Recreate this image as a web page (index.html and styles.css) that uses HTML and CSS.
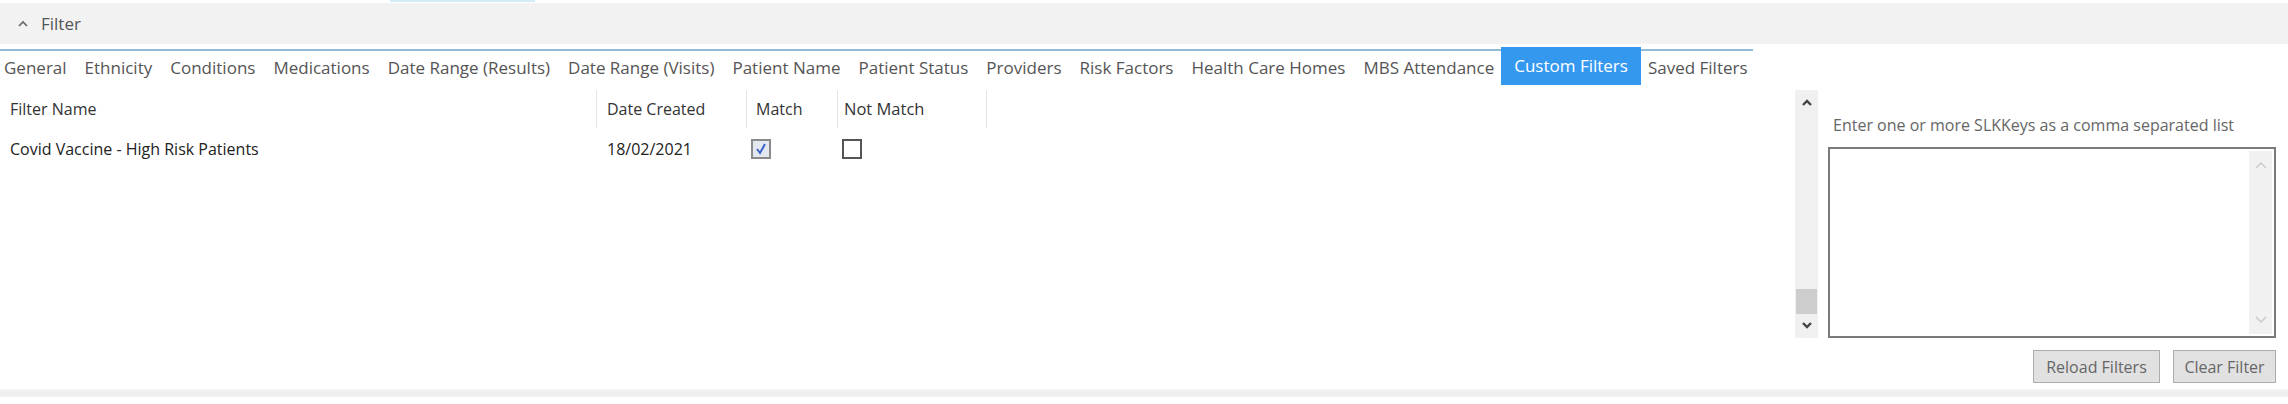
FILE: index.html
```html
<!DOCTYPE html>
<html lang="en">
<head>
    <meta charset="UTF-8">
    <title>Filter</title>
    <link rel="stylesheet" href="styles.css">
</head>
<body>
    <div class="topstrip"><span class="topmark"></span></div>

    <div class="header">
        <svg class="caret" width="10" height="7" viewBox="0 0 10 7"><polyline points="1,6 5,2 9,6" fill="none" stroke="#666" stroke-width="1.6"/></svg>
        <span>Filter</span>
    </div>

    <div class="tabs">
        <span class="tab">General</span>
        <span class="tab">Ethnicity</span>
        <span class="tab">Conditions</span>
        <span class="tab">Medications</span>
        <span class="tab">Date Range (Results)</span>
        <span class="tab">Date Range (Visits)</span>
        <span class="tab">Patient Name</span>
        <span class="tab">Patient Status</span>
        <span class="tab">Providers</span>
        <span class="tab">Risk Factors</span>
        <span class="tab">Health Care Homes</span>
        <span class="tab">MBS Attendance</span>
        <span class="tab active">Custom Filters</span>
        <span class="tab">Saved Filters</span>
    </div>

    <div class="content">
        <div class="grid-area">
            <div class="grid-row head">
                <div class="cell name">Filter Name</div>
                <div class="cell date">Date Created</div>
                <div class="cell match">Match</div>
                <div class="cell notmatch">Not Match</div>
            </div>
            <div class="grid-row data">
                <div class="cell name">Covid Vaccine - High Risk Patients</div>
                <div class="cell date">18/02/2021</div>
                <div class="cell box-cell"><span class="checkbox checked">
                    <svg width="14" height="14" viewBox="0 0 14 14"><polyline points="3,7 6,11 11,2" fill="none" stroke="#3b63c9" stroke-width="2"/></svg>
                </span></div>
                <div class="cell box-cell"><span class="checkbox"></span></div>
            </div>
        </div>

        <div class="vscroll">
            <svg class="arrow" width="12" height="8" viewBox="0 0 12 8"><polyline points="2,7 6,3 10,7" fill="none" stroke="#444" stroke-width="2.4"/></svg>
            <div class="track"><div class="thumb"></div></div>
            <svg class="arrow" width="12" height="8" viewBox="0 0 12 8"><polyline points="2,1 6,5 10,1" fill="none" stroke="#444" stroke-width="2.4"/></svg>
        </div>

        <div class="side">
            <div class="side-label">Enter one or more SLKKeys as a comma separated list</div>
            <div class="keys-box">
                <div class="keys-text"></div>
                <div class="keys-scroll">
                    <svg width="12" height="8" viewBox="0 0 12 8"><polyline points="1,7 6,2 11,7" fill="none" stroke="#c8c8c8" stroke-width="1.4"/></svg>
                    <svg width="12" height="8" viewBox="0 0 12 8"><polyline points="1,1 6,6 11,1" fill="none" stroke="#c8c8c8" stroke-width="1.4"/></svg>
                </div>
            </div>
            <div class="side-buttons">
                <button class="btn reload">Reload Filters</button>
                <button class="btn clear">Clear Filter</button>
            </div>
        </div>
    </div>

    <div class="bottom-band"></div>
</body>
</html>
```

FILE: styles.css
```css
body {
    margin: 0;
    width: 2288px;
    height: 404px;
    overflow: hidden;
    background-color: #FFFFFF;
    font-family: 'Open Sans', 'Noto Sans', sans-serif;
    font-size: 16px;
    color: #333333;
}

.topstrip {
    height: 3px;
}

.topmark {
    display: block;
    margin-left: 390px;
    width: 145px;
    height: 2px;
    background-color: #d3ecf8;
}

.header {
    height: 41px;
    background-color: #f2f2f2;
    display: flex;
    align-items: center;
    gap: 13px;
    padding-left: 18px;
    color: #555555;
    font-size: 17px;
}

.tabs {
    margin-top: 5px;
    width: 1753px;
    height: 34px;
    border-top: 2px solid #8fbcd4;
    display: flex;
    align-items: stretch;
}

.tab {
    padding: 0 9px;
    line-height: 34px;
    color: #555555;
    font-size: 17px;
    white-space: nowrap;
}

.tab:first-child {
    padding-left: 4px;
}

.tab.active {
    margin: -4px -2px 0;
    line-height: 38px;
    padding: 0 13px;
    background-color: #3598ef;
    color: #FFFFFF;
}

.content {
    margin-top: 5px;
    height: 299px;
    display: flex;
}

.grid-area {
    flex: 1;
}

.grid-row {
    display: grid;
    grid-template-columns: 597px 150px 91px 149px;
}

.grid-row.head {
    height: 38px;
}

.grid-row.head .cell {
    border-right: 1px solid #e4e4e4;
    line-height: 38px;
    color: #333333;
}

.grid-row.data {
    height: 42px;
    align-items: center;
    color: #222222;
}

.cell {
    white-space: nowrap;
}

.cell.name {
    padding-left: 10px;
}

.cell.date {
    padding-left: 10px;
}

.cell.match {
    padding-left: 9px;
}

.cell.notmatch {
    padding-left: 6px;
    font-size: 16.5px;
}

.box-cell {
    padding-left: 4px;
    display: flex;
    align-items: center;
}

.checkbox {
    box-sizing: border-box;
    width: 20px;
    height: 20px;
    border: 2px solid #555555;
    background-color: #FFFFFF;
    display: flex;
    align-items: center;
    justify-content: center;
}

.checkbox.checked {
    border-color: #8a8a8a;
    background-color: #e3e7ef;
}

.vscroll {
    width: 23px;
    height: 248px;
    background-color: #f0f0f0;
    display: flex;
    flex-direction: column;
    align-items: center;
}

.vscroll .arrow {
    margin: 8px 0;
}

.track {
    flex: 1;
    width: 100%;
    display: flex;
    flex-direction: column;
    justify-content: flex-end;
}

.thumb {
    height: 25px;
    background-color: #cdcdcd;
    margin: 0 1px;
}

.side {
    width: 470px;
    box-sizing: border-box;
    padding: 0 12px 0 10px;
}

.side-label {
    margin-top: 23px;
    padding-left: 5px;
    line-height: 24px;
    color: #666666;
    white-space: nowrap;
}

.keys-box {
    margin-top: 10px;
    box-sizing: border-box;
    height: 191px;
    border: 2px solid #7a7a7a;
    display: flex;
}

.keys-text {
    flex: 1;
}

.keys-scroll {
    width: 23px;
    margin: 2px 2px 2px 0;
    background-color: #f1f1f1;
    display: flex;
    flex-direction: column;
    justify-content: space-between;
    align-items: center;
    padding: 10px 0;
}

.side-buttons {
    margin-top: 12px;
    display: flex;
    justify-content: flex-end;
    gap: 13px;
}

.btn {
    height: 33px;
    padding: 0 10px;
    background-color: #e1e1e1;
    border: 1px solid #adadad;
    color: #666666;
    font-family: 'Open Sans', 'Noto Sans', sans-serif;
    font-size: 16px;
}

.btn.reload {
    width: 127px;
}

.btn.clear {
    width: 103px;
}

.bottom-band {
    height: 8px;
    background: linear-gradient(#f6f6f6, #ececec 50%, #f3f3f3);
}
```
